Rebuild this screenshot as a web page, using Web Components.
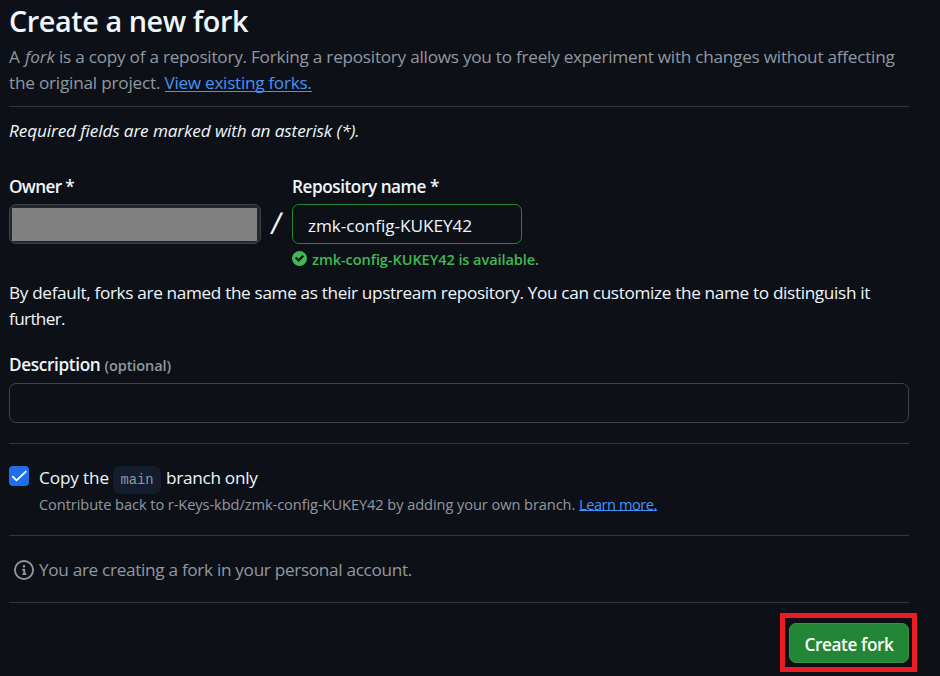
<!DOCTYPE html>
<html lang="en">
<head>
<meta charset="utf-8">
<title>Create a new fork</title>
<style>
html,body{margin:0;background:#0d1117}
body{width:940px;height:676px;overflow:hidden;font:17.2px/26px "Open Sans","Noto Sans",sans-serif;color:#f0f6fc}
</style>
</head>
<body>
<fork-page></fork-page>
<script>
// A single line of text whose tracking is adjusted to a given measure.
class TextRun extends HTMLElement{
  constructor(){super();this.attachShadow({mode:'open'}).innerHTML=`<style>
  :host{display:inline-block;white-space:pre;vertical-align:baseline}
  span{display:inline-block}</style><span><slot></slot></span>`;}
  connectedCallback(){
    const w=+this.getAttribute('w');if(!w)return;
    const s=this.shadowRoot.querySelector('span');
    const n=this.textContent.length;
    s.style.letterSpacing=((w-s.getBoundingClientRect().width)/n)+'px';
  }
}
class RuleLine extends HTMLElement{
  constructor(){super();this.attachShadow({mode:'open'}).innerHTML=`<style>:host{display:block;height:1px;background:#30363d}</style>`;}
}
class TextLink extends HTMLElement{
  constructor(){super();this.attachShadow({mode:'open'}).innerHTML=`<style>:host{display:inline}a{display:inline-block;line-height:1.1;color:#4493f8;background:linear-gradient(#4493f8,#4493f8) 0 calc(100% - 1px)/100% 1px no-repeat}</style><a><slot></slot></a>`;}
}
class FormField extends HTMLElement{
  constructor(){super();this.attachShadow({mode:'open'}).innerHTML=`<style>
  :host{display:block}
  .label{height:26px;font-weight:600;margin-bottom:var(--label-gap,5px)}
  .box{box-sizing:border-box;height:40px;border:1px solid #3d444d;border-radius:7px;display:flex;align-items:center;padding:4px 15px 0}
  :host([state=valid]) .box{border-color:#238636}
  :host([state=masked]) .box{background:#212830;padding:3px 3px 2px 2px;align-items:stretch}
  </style><div class="label"><slot name="label"></slot></div><div class="box"><slot></slot></div>`;}
}
class MaskBlock extends HTMLElement{
  constructor(){super();this.attachShadow({mode:'open'}).innerHTML=`<style>:host{display:block;flex:1;background:#808080}</style>`;}
}
class ValidNote extends HTMLElement{
  constructor(){super();this.attachShadow({mode:'open'}).innerHTML=`<style>
  :host{display:flex;align-items:center;gap:5px;height:20px;margin-top:5px;color:#3fb950;font-size:14.6px;line-height:20px;font-weight:600;white-space:nowrap}
  svg{width:15px;height:15px;flex:none;margin-top:-1px}</style>
  <svg viewBox="0 0 12 12"><path fill="#3fb950" fill-rule="evenodd" d="M6 0a6 6 0 1 1 0 12A6 6 0 0 1 6 0Zm-.705 8.737L9.63 4.403 8.392 3.166 5.295 6.263l-1.7-1.702L2.356 5.8l2.938 2.938Z"/></svg><slot></slot>`;}
}
class CheckOption extends HTMLElement{
  constructor(){super();this.attachShadow({mode:'open'}).innerHTML=`<style>
  :host{display:grid;grid-template-columns:20px 1fr;column-gap:10px}
  .tick{width:20px;height:20px;border-radius:4px;background:#1f6feb;margin-top:1px}
  svg{display:block;width:20px;height:20px}
  .line{height:29px;white-space:nowrap}
  .sub{grid-column:2;height:20px;font-size:14.6px;line-height:20px;color:#9198a1;white-space:nowrap}
  </style><div class="tick"><svg viewBox="0 0 20 20"><path d="M3.8 10.7 7.5 14.4 16.8 5.6" fill="none" stroke="#fff" stroke-width="1.9" stroke-linecap="round" stroke-linejoin="round"/></svg></div>
  <div class="line"><slot></slot></div><div class="sub"><slot name="sub"></slot></div>`;}
}
class CodeTag extends HTMLElement{
  constructor(){super();this.attachShadow({mode:'open'}).innerHTML=`<style>
  :host{display:inline-flex;box-sizing:border-box;justify-content:center;width:48px;height:28px;padding-top:1px;line-height:28px;border-radius:7px;background:#121d2f;color:#9198a1;font-family:"Liberation Mono",monospace;font-size:13.8px;margin:-2px 5px 0 4px;vertical-align:baseline}
  </style><slot></slot>`;}
}
class InfoRow extends HTMLElement{
  constructor(){super();this.attachShadow({mode:'open'}).innerHTML=`<style>
  :host{display:flex;align-items:center;gap:5px;height:26px;padding-left:5px;color:#9198a1}
  svg{width:20px;height:20px;flex:none}</style>
  <svg viewBox="0 0 16 16"><path fill="#9198a1" d="M0 8a8 8 0 1 1 16 0A8 8 0 0 1 0 8Zm8-6.5a6.5 6.5 0 1 0 0 13 6.5 6.5 0 0 0 0-13ZM6.5 7.75A.75.75 0 0 1 7.25 7h1a.75.75 0 0 1 .75.75v2.75h.25a.75.75 0 0 1 0 1.5h-2a.75.75 0 0 1 0-1.5h.25v-2h-.25a.75.75 0 0 1-.75-.75ZM8 6a1 1 0 1 1 0-2 1 1 0 0 1 0 2Z"/></svg><slot></slot>`;}
}
class PrimaryButton extends HTMLElement{
  constructor(){super();this.attachShadow({mode:'open'}).innerHTML=`<style>
  :host{display:block;box-sizing:border-box;width:137px;height:59px;border:5px solid #ed1c24;padding:5px 3px 4px 4px}
  button{box-sizing:border-box;width:120px;height:40px;display:flex;align-items:center;justify-content:center;padding:4px 0 0;border:1px solid #39914a;border-radius:7px;background:#238636;color:#fff;font:inherit;font-weight:600}
  </style><button><slot></slot></button>`;}
}
class ForkPage extends HTMLElement{
  constructor(){super();this.attachShadow({mode:'open'}).innerHTML=`<style>
  :host{display:block;box-sizing:border-box;width:940px;height:676px;padding:3px 31px 0 9px}
  h1{margin:0 0 5px;height:36px;font-size:28.8px;line-height:36px;font-weight:600}
  .line{height:26px;white-space:nowrap}
  .muted{color:#9198a1}
  .names{display:flex;margin-top:30px;--label-gap:4px}
  .slash{width:31px;padding-top:36px;text-align:center;font-size:30px;line-height:26px}
  .slash span{display:inline-block;transform:skewX(-7deg)}
  form-field[state=masked]{width:252px}
  .repo{width:230px}
  .opt{font-size:14.5px;color:#9198a1}
  .foot{display:flex;justify-content:flex-end;margin:10px -8px 0 0}
  .frk{font-style:italic}
  </style>
  <h1><text-run w="239">Create a new fork</text-run></h1>
  <div class="line muted"><text-run w="16">A </text-run><text-run class="frk" w="34">fork </text-run><text-run w="835.5">is a copy of a repository. Forking a repository allows you to freely experiment with changes without affecting</text-run></div>
  <div class="line muted"><text-run w="155.5">the original project. </text-run><text-link><text-run w="147">View existing forks.</text-run></text-link></div>
  <rule-line style="margin-top:10px"></rule-line>
  <div class="line" style="margin-top:11px;font-style:italic"><text-run w="350.5">Required fields are marked with an asterisk (*).</text-run></div>
  <div class="names">
    <form-field state="masked"><text-run slot="label" w="65">Owner *</text-run><mask-block></mask-block></form-field>
    <div class="slash"><span>/</span></div>
    <div class="repo"><form-field state="valid"><text-run slot="label" w="147">Repository name *</text-run><text-run w="164">zmk-config-KUKEY42</text-run></form-field>
    <valid-note><text-run w="227">zmk-config-KUKEY42 is available.</text-run></valid-note></div>
  </div>
  <div class="line" style="margin-top:11px"><text-run w="861">By default, forks are named the same as their upstream repository. You can customize the name to distinguish it</text-run></div>
  <div class="line"><text-run w="56">further.</text-run></div>
  <form-field style="margin-top:20px"><span slot="label"><text-run w="95.5">Description </text-run><text-run class="opt" w="66.5">(optional)</text-run></span></form-field>
  <rule-line style="margin-top:20px"></rule-line>
  <check-option style="margin-top:21px"><text-run w="70">Copy the</text-run><code-tag><text-run w="33">main</text-run></code-tag><text-run w="91.5">branch only</text-run>
    <span slot="sub"><text-run w="540">Contribute back to r-Keys-kbd/zmk-config-KUKEY42 by adding your own branch. </text-run><text-link><text-run w="78">Learn more.</text-run></text-link></span></check-option>
  <rule-line style="margin-top:21px"></rule-line>
  <info-row style="margin-top:21px"><text-run w="373">You are creating a fork in your personal account.</text-run></info-row>
  <rule-line style="margin-top:19px"></rule-line>
  <div class="foot"><primary-button><text-run w="89">Create fork</text-run></primary-button></div>`;}
}
for(const [n,c] of Object.entries({'text-run':TextRun,'rule-line':RuleLine,'text-link':TextLink,'form-field':FormField,'mask-block':MaskBlock,'valid-note':ValidNote,'check-option':CheckOption,'code-tag':CodeTag,'info-row':InfoRow,'primary-button':PrimaryButton,'fork-page':ForkPage}))customElements.define(n,c);
</script>
</body>
</html>
